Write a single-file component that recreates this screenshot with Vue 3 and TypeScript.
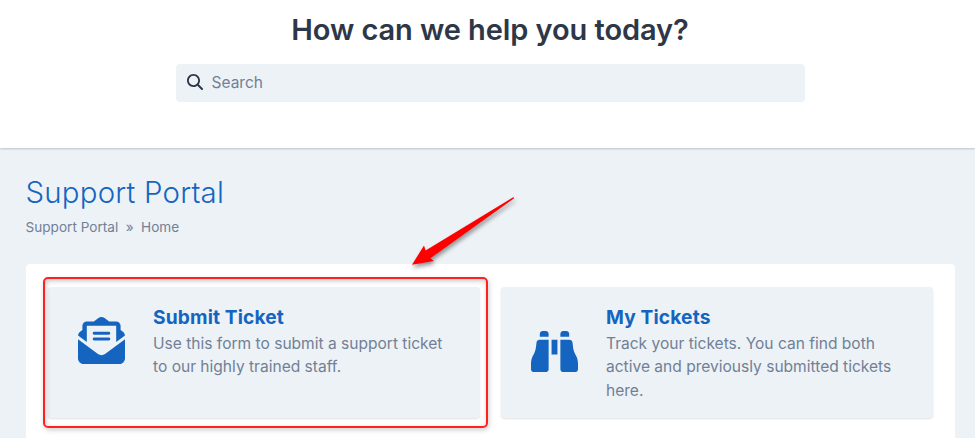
<script setup lang="ts">
interface Tile {
  title: string
  text: string
  icon: string
  highlighted: boolean
}

const searchIcon =
  'M416 208c0 45.9-14.9 88.3-40 122.7L502.6 457.4c12.5 12.5 12.5 32.8 0 45.3s-32.8 12.5-45.3 0L330.7 376c-34.4 25.2-76.8 40-122.7 40C93.1 416 0 322.9 0 208S93.1 0 208 0S416 93.1 416 208zM208 358a150 150 0 1 0 0-300 150 150 0 1 0 0 300z'

const tiles: Tile[] = [
  {
    title: 'Submit Ticket',
    text: 'Use this form to submit a support ticket to our highly trained staff.',
    icon: 'M215.4 96H144 107.8 96v8.8V144v40.4 89L.2 202.5c1.6-18.1 10.9-34.9 25.7-45.8L48 140.3V96c0-26.5 21.5-48 48-48h76.6l49.9-36.9C232.2 3.9 243.9 0 256 0s23.8 3.9 33.5 11L339.4 48H416c26.5 0 48 21.5 48 48v44.3l22.1 16.4c14.8 10.9 24.1 27.7 25.7 45.8L416 273.4v-89V144 104.8 96H404.2 368 296.6 215.4zM0 448V242.1L217.6 403.3c11.1 8.2 24.6 12.7 38.4 12.7s27.3-4.4 38.4-12.7L512 242.1V448c0 35.3-28.7 64-64 64H64c-35.3 0-64-28.7-64-64zM176 160H336c8.8 0 16 7.2 16 16s-7.2 16-16 16H176c-8.8 0-16-7.2-16-16s7.2-16 16-16zm0 64H336c8.8 0 16 7.2 16 16s-7.2 16-16 16H176c-8.8 0-16-7.2-16-16s7.2-16 16-16z',
    highlighted: true,
  },
  {
    title: 'My Tickets',
    text: 'Track your tickets. You can find both active and previously submitted tickets here.',
    icon: 'M128 32h32c17.7 0 32 14.3 32 32V96H96V64c0-17.7 14.3-32 32-32zm64 96V448c0 17.7-14.3 32-32 32H32c-17.7 0-32-14.3-32-32V388.9c0-34.6 9.4-68.6 27.2-98.3C40.9 267.8 49.7 242.4 53 216L60.5 156c2-16 15.6-28 31.8-28H192zm227.8 0c16.1 0 29.8 12 31.8 28L459 216c3.3 26.4 12.1 51.8 25.8 74.6c17.8 29.7 27.2 63.7 27.2 98.3V448c0 17.7-14.3 32-32 32H352c-17.7 0-32-14.3-32-32V128h99.8zM320 64c0-17.7 14.3-32 32-32h32c17.7 0 32 14.3 32 32V96H320V64zm-32 64V288H224V128h64z',
    highlighted: false,
  },
]
</script>

<template>
  <div class="page">
    <header class="hero">
      <h1 class="hero-title">How can we help you today?</h1>
      <label class="search">
        <svg class="search-icon" viewBox="0 0 512 512"><path :d="searchIcon" /></svg>
        <input class="search-input" type="text" placeholder="Search" />
      </label>
    </header>

    <main class="content">
      <h2 class="portal-title">Support Portal</h2>
      <nav class="crumbs">
        <span>Support Portal</span>
        <span>»</span>
        <span>Home</span>
      </nav>

      <section class="panel">
        <article v-for="tile in tiles" :key="tile.title" class="tile">
          <div class="tile-row">
            <svg class="tile-icon" viewBox="0 0 512 512"><path :d="tile.icon" /></svg>
            <div class="tile-body">
              <h3 class="tile-title">{{ tile.title }}</h3>
              <p class="tile-text">{{ tile.text }}</p>
            </div>
          </div>
          <div v-if="tile.highlighted" class="outline"></div>
        </article>
      </section>

      <svg class="arrow" viewBox="0 0 120 84">
        <path d="M7 74.8 L19 55.6 L20.6 60.4 L108.2 7.2 Q109.4 7.2 108.8 8.4 L25.4 68.2 L28.8 70.9 Z" />
      </svg>
    </main>
  </div>
</template>

<style>
body {
  background: #edf2f7;
  overflow: hidden;
}
</style>

<style scoped>
.page {
  height: 438px;
  display: flex;
  flex-direction: column;
  overflow: hidden;
  background: #edf2f7;
  font-family: Inter, "Liberation Sans", sans-serif;
  color: #718096;
}

h1,
h2,
h3,
p {
  margin: 0;
}

.hero {
  flex: none;
  height: 148px;
  box-sizing: border-box;
  padding: 12px 0 0 5px;
  display: flex;
  flex-direction: column;
  align-items: center;
  background: #fff;
  box-shadow: 0 1px 2px rgba(0, 0, 0, 0.2);
}

.hero-title {
  font-size: 29px;
  line-height: 36px;
  font-weight: 600;
  letter-spacing: -0.08px;
  color: #2d3748;
  white-space: nowrap;
}

.search {
  width: 629px;
  height: 38px;
  margin-top: 15.5px;
  box-sizing: border-box;
  padding: 0 11px;
  display: flex;
  align-items: center;
  gap: 9px;
  border-radius: 4px;
  background: #edf2f7;
}

.search-icon {
  flex: none;
  width: 16px;
  height: 16px;
  margin-top: -1px;
  fill: #2d3748;
}

.search-input {
  flex: 1;
  min-width: 0;
  padding: 0;
  border: 0;
  outline: 0;
  background: transparent;
  font: 400 15.5px/24px Inter, "Liberation Sans", sans-serif;
}

.search-input::placeholder {
  color: #718096;
  opacity: 1;
}

.content {
  position: relative;
  flex: 1;
  padding: 26px 20px 0 25.5px;
}

.portal-title {
  font-size: 29.4px;
  line-height: 38px;
  font-weight: 350;
  letter-spacing: 0.22px;
  color: #1565c0;
}

.crumbs {
  display: flex;
  gap: 7.5px;
  margin-top: 5px;
  font-size: 13.6px;
  line-height: 20px;
}

.panel {
  height: 220px;
  margin-top: 27px;
  box-sizing: border-box;
  padding: 23px 22px;
  display: grid;
  grid-template-columns: 432px 432px;
  align-items: start;
  gap: 21px;
  border-radius: 4px;
  background: #fff;
}

.tile {
  position: relative;
  height: 131px;
  box-sizing: border-box;
  padding: 16px 30px;
  border-radius: 4px;
  background: #edf2f7;
  box-shadow: 0 1px 2px rgba(0, 0, 0, 0.12);
}

.tile-row {
  display: flex;
  align-items: center;
  gap: 28.5px;
}

.tile-icon {
  flex: none;
  width: 47px;
  height: 47px;
  margin-top: -1px;
  fill: #1565c0;
}

.tile-title {
  margin-bottom: 1px;
  font-size: 19.2px;
  line-height: 28px;
  font-weight: 700;
  letter-spacing: 0.13px;
  color: #1565c0;
}

.tile-text {
  width: 300px;
  font-size: 15.55px;
  line-height: 23.3px;
}

.outline {
  position: absolute;
  inset: -10px -8px -9.5px -5px;
  border: 2px solid #ff2020;
  border-radius: 5px;
  box-shadow: 1px 2px 5px rgba(0, 0, 0, 0.2), inset 1px 2px 5px rgba(0, 0, 0, 0.22);
}

.arrow {
  position: absolute;
  left: 405px;
  top: 42px;
  width: 120px;
  height: 84px;
  fill: #fe0000;
  filter: drop-shadow(1px 3px 2px rgba(0, 0, 0, 0.4));
}
</style>
